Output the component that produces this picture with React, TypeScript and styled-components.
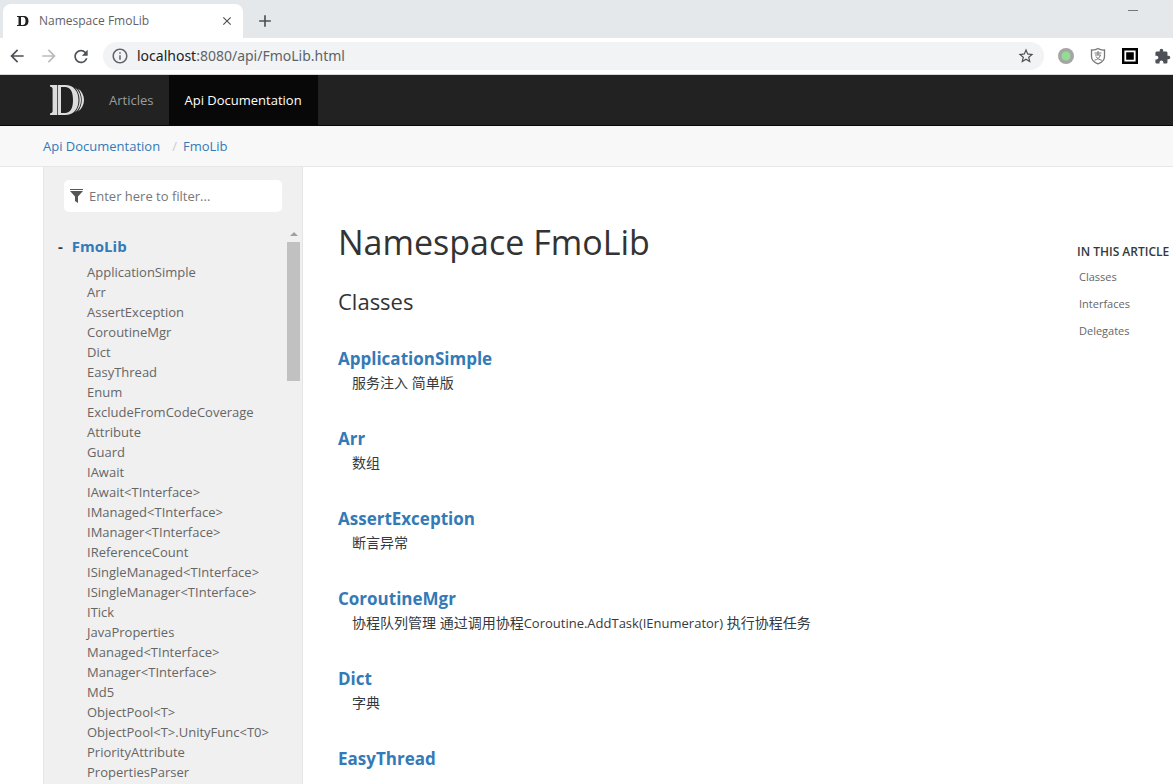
import React from "react";
import styled, { createGlobalStyle } from "styled-components";
import { MdArrowBack, MdArrowForward, MdRefresh, MdClose, MdAdd, MdInfoOutline, MdStarBorder, MdExtension } from "react-icons/md";

const Global = createGlobalStyle`
  * { box-sizing: border-box; }
  body {
    margin: 0;
    background: #fff;
    color: #34393e;
    font-family: "Open Sans", "Noto Sans CJK SC", sans-serif;
    font-size: 13px;
    line-height: 20px;
  }
  a { text-decoration: none; }
  ul, ol { list-style: none; margin: 0; padding: 0; }
  h1, h2, h3, h4, p { margin: 0; }
`;

const Window = styled.div`
  display: flex;
  flex-direction: column;
  height: 100vh;
  overflow: hidden;
`;

const TabStrip = styled.div`
  display: flex;
  flex: none;
  align-items: flex-end;
  height: 38px;
  padding-left: 3px;
  background: #e5e8eb;
`;

const Tab = styled.div`
  display: flex;
  align-items: center;
  width: 240px;
  height: 34px;
  padding: 0 8px 0 12px;
  background: #fff;
  border-radius: 8px 8px 0 0;
  color: #5f6368;
`;

const TabTitle = styled.span`
  flex: 1;
  margin-left: 8px;
  font-size: 12px;
`;

const IconButton = styled.button<{ $dim?: boolean; $size?: number }>`
  display: flex;
  flex: none;
  align-items: center;
  justify-content: center;
  width: ${(p) => p.$size ?? 20}px;
  height: ${(p) => p.$size ?? 20}px;
  padding: 0;
  border: 0;
  background: none;
  color: ${(p) => (p.$dim ? "#b9bbbe" : "#4d5156")};
`;

const NewTab = styled.div`
  flex: 1;
  align-self: center;
  padding: 4px 0 0 12px;
`;

const Minimize = styled.button`
  align-self: flex-start;
  width: 10px;
  height: 11px;
  margin-right: 35px;
  padding: 0;
  border: 0;
  border-bottom: 1px solid #777;
  background: none;
`;

const Toolbar = styled.div`
  display: flex;
  flex: none;
  align-items: center;
  gap: 12px;
  height: 37px;
  padding: 0 0 0 7px;
  border-bottom: 1px solid #d5d7d9;
`;

const Address = styled.div`
  display: flex;
  flex: 1;
  align-items: center;
  height: 28px;
  padding: 0 8px;
  border-radius: 14px;
  background: #f1f3f4;
  color: #5f6368;
`;

const Url = styled.span`
  flex: 1;
  margin-left: 8px;
  font-family: "Noto Sans", sans-serif;
  font-size: 14px;

  b {
    color: #202124;
    font-weight: 400;
  }
`;

const Extensions = styled.div`
  display: flex;
  gap: 12px;
  margin-right: 1px;
`;

const Navbar = styled.nav`
  display: flex;
  flex: none;
  height: 51px;
  padding-left: 43px;
  border-bottom: 1px solid #080808;
  background: #222;
`;

const Brand = styled.a`
  display: flex;
  align-items: center;
  width: 51px;
  padding-left: 6px;
`;

const NavLink = styled.a<{ $active?: boolean }>`
  display: flex;
  align-items: center;
  padding: 0 16px 0 15px;
  background: ${(p) => (p.$active ? "#080808" : "transparent")};
  color: ${(p) => (p.$active ? "#fff" : "#9d9d9d")};
`;

const Breadcrumb = styled.ol`
  display: flex;
  flex: none;
  align-items: center;
  height: 41px;
  padding-left: 43px;
  border-bottom: 1px solid #e7e7e7;
  background: #f8f8f8;

  li + li::before {
    content: "/";
    padding: 0 6px 0 12px;
    color: #ccc;
  }

  a { color: #337ab7; }
`;

const Body = styled.div`
  display: flex;
  flex: 1;
  min-height: 0;
  padding-left: 43px;
`;

const Sidebar = styled.aside`
  display: flex;
  flex: none;
  flex-direction: column;
  width: 260px;
  padding-top: 13px;
  border: solid #e5e5e5;
  border-width: 0 1px;
  background: #f0f0f0;
`;

const Filter = styled.label`
  display: flex;
  flex: none;
  align-items: center;
  gap: 6px;
  height: 32px;
  margin: 0 20px;
  padding: 0 6px;
  border-radius: 5px;
  background: #fff;

  input {
    flex: 1;
    min-width: 0;
    padding: 0;
    border: 0;
    outline: 0;
    color: #777;
    font: inherit;
  }

  input::placeholder { color: #777; opacity: 1; }
`;

const TocPane = styled.div`
  display: flex;
  flex: 1;
  min-height: 0;
  margin-top: 16px;
  padding-right: 2px;
`;

const Toc = styled.div`
  flex: 1;
  min-width: 0;
  padding: 8px 0 0 14px;
  overflow: hidden;
`;

const TocRoot = styled.div`
  display: flex;
  gap: 9px;
  margin-bottom: 6px;
  font-size: 15px;
  font-weight: 700;

  a { color: #337ab7; }
`;

const TocList = styled.ul`
  padding-left: 29px;

  a { color: #666; }
`;

const TocItem = styled.li`
  max-width: 184px;
`;

const Scrollbar = styled.div`
  display: flex;
  flex: none;
  flex-direction: column;
  align-items: center;
  gap: 6px;
  width: 13px;
  padding-top: 4px;

  &::before {
    content: "";
    border: solid transparent;
    border-width: 0 4px 4px;
    border-bottom-color: #a0a0a0;
  }

  &::after {
    content: "";
    width: 13px;
    height: 139px;
    background: #c1c1c1;
  }
`;

const Article = styled.main`
  flex: 1;
  min-width: 0;
  padding: 50px 0 0 35px;

  h1 {
    color: #333;
    font-size: 34px;
    font-weight: 400;
    line-height: 50px;
  }

  h2 {
    margin-top: 18px;
    color: #333;
    font-size: 22px;
    font-weight: 400;
    line-height: 32px;
  }
`;

const Entries = styled.div`
  margin-top: 30px;
`;

const Entry = styled.section`
  height: 80px;

  h3 {
    font-size: 17px;
    font-weight: 700;
    line-height: 24px;
  }

  a { color: #337ab7; }
`;

const Summary = styled.p`
  padding-left: 14px;
  font-size: 14px;
  line-height: 24px;
`;

const Signature = styled.span`
  font-size: 13px;
`;

const Affix = styled.aside`
  flex: none;
  width: 96px;
  padding-top: 74px;
  white-space: nowrap;

  h4 {
    font-size: 12px;
    font-weight: 600;
    line-height: 22px;
  }

  li {
    padding-left: 2px;
    font-size: 11px;
    line-height: 27px;
  }

  a { color: #666; }
`;

const toc = [
  "ApplicationSimple", "Arr", "AssertException", "CoroutineMgr", "Dict", "EasyThread", "Enum",
  "ExcludeFromCodeCoverage\u200bAttribute", "Guard", "IAwait", "IAwait<TInterface>",
  "IManaged<TInterface>", "IManager<TInterface>", "IReferenceCount", "ISingleManaged<TInterface>",
  "ISingleManager<TInterface>", "ITick", "JavaProperties", "Managed<TInterface>",
  "Manager<TInterface>", "Md5", "ObjectPool<T>", "ObjectPool<T>.UnityFunc<T0>",
  "PriorityAttribute", "PropertiesParser",
];

const entries: { name: string; summary?: React.ReactNode }[] = [
  { name: "ApplicationSimple", summary: "服务注入 简单版" },
  { name: "Arr", summary: "数组" },
  { name: "AssertException", summary: "断言异常" },
  {
    name: "CoroutineMgr",
    summary: <>协程队列管理 通过调用协程<Signature>Coroutine.AddTask(IEnumerator)</Signature> 执行协程任务</>,
  },
  { name: "Dict", summary: "字典" },
  { name: "EasyThread" },
];

const Logo = () => (
  <svg width="36" height="32" viewBox="0 0 36 32" fill="#ddd">
    <path d="M1 1H8.200V31H1V29.500C3 29 3.600 28.500 3.600 26.500V5.500C3.600 3.500 3 3 1 2.500Z" />
    <path fillRule="evenodd" d="M8.900 1H16C24.500 1 29.500 7 29.500 16S24.500 31 16 31H8.900ZM12 3V29H16C21.500 29 24 24 24 16S21.500 3 16 3Z" />
    <path d="M26 3.500C34 9 34 23 26 28.500C32 21 32 11 26 3.500Z" />
    <path d="M29 4.500C37 10 37 22 29 27.500C34 20 34 12 29 4.500Z" />
  </svg>
);

const Favicon = () => (
  <svg width="16" height="16" viewBox="0 0 16 16" fill="#222">
    <path fillRule="evenodd" d="M2 3H8.500C12 3 13.500 5 13.500 8S12 13 8.500 13H2V12H3.500V4H2ZM6 4V12H7.500C9.800 12 10.500 10.500 10.500 8S9.800 4 7.500 4Z" />
  </svg>
);

const Shield = () => (
  <svg width="20" height="20" viewBox="0 0 20 20" fill="none" stroke="#777">
    <path d="M10 2.500C8 3.800 5.500 4.200 3.500 4V10.500C3.500 14 6 16.300 10 17.800C14 16.300 16.500 14 16.500 10.500V4C14.500 4.200 12 3.800 10 2.500Z" strokeWidth="1.300" />
    <path d="M6.500 7H13.500M10 5V9M7 9H12.500C11.500 12 9.500 13.500 6.500 14.200M8 10.500C9.500 12.800 11.500 13.800 13.800 14.200" />
  </svg>
);

export default function App() {
  return (
    <Window>
      <Global />
      <TabStrip>
        <Tab>
          <Favicon />
          <TabTitle>Namespace FmoLib</TabTitle>
          <IconButton aria-label="Close tab" $size={16}><MdClose size={14} /></IconButton>
        </Tab>
        <NewTab>
          <IconButton aria-label="New tab"><MdAdd size={20} /></IconButton>
        </NewTab>
        <Minimize aria-label="Minimize" />
      </TabStrip>
      <Toolbar>
        <IconButton aria-label="Back"><MdArrowBack size={20} /></IconButton>
        <IconButton aria-label="Forward" $dim><MdArrowForward size={20} /></IconButton>
        <IconButton aria-label="Reload"><MdRefresh size={21} /></IconButton>
        <Address>
          <MdInfoOutline size={18} />
          <Url><b>localhost</b>:8080/api/FmoLib.html</Url>
          <IconButton aria-label="Bookmark"><MdStarBorder size={18} /></IconButton>
        </Address>
        <Extensions>
          <IconButton aria-label="Status">
            <svg width="16" height="16"><circle cx="8" cy="8" r="8" fill="#a5a5a5" /><circle cx="8" cy="8" r="4.500" fill="#93dc93" /></svg>
          </IconButton>
          <IconButton aria-label="Payment shield"><Shield /></IconButton>
          <IconButton aria-label="Frame">
            <svg width="16" height="16"><path d="M0 0H16V16H0Z" fill="#000" /><path d="M3.300 3.300H12.700V12.700H3.300Z" fill="#000" stroke="#fff" strokeWidth="1.800" /></svg>
          </IconButton>
          <IconButton aria-label="Extensions"><MdExtension size={17} /></IconButton>
        </Extensions>
      </Toolbar>
      <Navbar>
        <Brand href="#" aria-label="Home"><Logo /></Brand>
        <NavLink href="#">Articles</NavLink>
        <NavLink href="#" $active>Api Documentation</NavLink>
      </Navbar>
      <Breadcrumb>
        <li><a href="#">Api Documentation</a></li>
        <li><a href="#">FmoLib</a></li>
      </Breadcrumb>
      <Body>
        <Sidebar>
          <Filter>
            <svg width="13" height="14" viewBox="0 0 13 14" fill="#555"><path d="M0 0H13V1H0ZM0 2H13L8 7.500V14L5 12V7.500Z" /></svg>
            <input type="text" aria-label="Filter" placeholder="Enter here to filter..." />
          </Filter>
          <TocPane>
            <Toc>
              <TocRoot><span>-</span><a href="#">FmoLib</a></TocRoot>
              <TocList>
                {toc.map((name) => <TocItem key={name}><a href="#">{name}</a></TocItem>)}
              </TocList>
            </Toc>
            <Scrollbar />
          </TocPane>
        </Sidebar>
        <Article>
          <h1>Namespace FmoLib</h1>
          <h2>Classes</h2>
          <Entries>
            {entries.map(({ name, summary }) => (
              <Entry key={name}>
                <h3><a href="#">{name}</a></h3>
                {summary && <Summary>{summary}</Summary>}
              </Entry>
            ))}
          </Entries>
        </Article>
        <Affix>
          <h4>IN THIS ARTICLE</h4>
          <ul>
            <li><a href="#">Classes</a></li>
            <li><a href="#">Interfaces</a></li>
            <li><a href="#">Delegates</a></li>
          </ul>
        </Affix>
      </Body>
    </Window>
  );
}
